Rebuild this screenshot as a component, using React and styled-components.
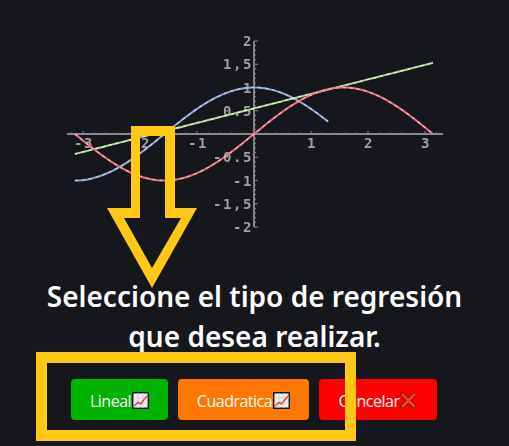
import React from "react";
import styled, { createGlobalStyle } from "styled-components";

const Global = createGlobalStyle`
  html, body { margin: 0; padding: 0; background: #15171c; }
  body { font-family: "Noto Sans", "Open Sans", "Liberation Sans", sans-serif; color: #fff; overflow: hidden; }
`;

const Page = styled.div`
  position: relative;
  width: 509px;
  height: 446px;
  display: flex;
  flex-direction: column;
  align-items: center;
  box-sizing: border-box;
  padding-top: 30px;
  overflow: hidden;
`;

const PlotFigure = styled.svg`
  display: block;
  width: 400px;
  height: 214px;
  flex: none;
  margin-left: 1px;
  filter: blur(0.35px);
`;

const Title = styled.h2`
  margin: 32px 0 0;
  width: 440px;
  font-size: 28px;
  line-height: 40px;
  font-weight: 600;
  text-align: center;
`;

const ButtonRow = styled.div`
  display: flex;
  gap: 10px;
  margin: 23px 1px 0 0;
`;

const Action = styled.button`
  display: flex;
  align-items: center;
  justify-content: center;
  height: 41px;
  width: ${(p) => p.$w}px;
  padding: 2px 0 0;
  border: none;
  border-radius: 4px;
  background: ${(p) => p.$bg};
  color: #fff;
  font: 400 16px "Open Sans", "Noto Sans", sans-serif;
  letter-spacing: -0.5px;
`;

const Icon = styled.svg`
  width: 17px;
  height: 17px;
  flex: none;
  margin-left: 1px;
`;

const Annotation = styled.svg`
  position: absolute;
  left: 0;
  top: 0;
  width: 509px;
  height: 446px;
  pointer-events: none;
`;

const X0 = 253 - 54, Y0 = 134 - 30;
const px = (x) => X0 + 57 * x;
const py = (y) => Y0 - 46.5 * y;
const curve = (fn, a, b) => {
  const pts = [];
  for (let i = 0; i <= 80; i++) {
    const x = a + ((b - a) * i) / 80;
    pts.push(`${px(x).toFixed(1)},${py(fn(x)).toFixed(1)}`);
  }
  return pts.join(" ");
};

const Ticks = () => {
  const t = [];
  for (let i = -16; i <= 16; i++) {
    const x = px(i / 5);
    t.push(<line key={"x" + i} x1={x} x2={x} y1={Y0 - (i % 5 === 0 ? 3 : 1.5)} y2={Y0} />);
  }
  for (let i = -20; i <= 20; i++) {
    const y = py(i / 10);
    t.push(<line key={"y" + i} x1={X0} x2={X0 + (i % 5 === 0 ? 4 : 2)} y1={y} y2={y} />);
  }
  return <g stroke="#8a8a8a" strokeWidth="1">{t}</g>;
};

const AxisLabel = styled.text`
  font-family: "DejaVu Sans Mono", "Liberation Mono", monospace;
  font-size: 14px;
  font-weight: 700;
  letter-spacing: 1.6px;
  fill: #a0a0a0;
`;

const Curve = ({ fn, a, b, color, light }) => (
  <>
    <polyline points={curve(fn, a, b)} fill="none" stroke={color} strokeWidth="2" />
    <polyline points={curve(fn, a, b)} fill="none" stroke={light} strokeWidth="1.2" strokeDasharray="3 4" />
  </>
);

const Plot = () => (
  <PlotFigure viewBox="0 0 400 214">
    <line x1={12} x2={388} y1={Y0} y2={Y0} stroke="#b0b0b0" strokeWidth="1.4" />
    <line x1={X0} x2={X0} y1={py(2)} y2={py(-2)} stroke="#b0b0b0" strokeWidth="1.4" />
    <Ticks />
    {[["-3", -3], ["-2", -2], ["-1", -1], ["1", 1], ["2", 2], ["3", 3]].map(([l, v]) => (
      <AxisLabel key={l} x={px(v) + 1} y={Y0 + 14} textAnchor="middle">{l}</AxisLabel>
    ))}
    {[["2", 2], ["1,5", 1.5], ["1", 1], ["0.5", 0.5], ["-0.5", -0.5], ["-1", -1], ["-1,5", -1.5], ["-2", -2]].map(([l, v]) => (
      <AxisLabel key={l} x={X0 - 1} y={py(v) + 5} textAnchor="end">{l}</AxisLabel>
    ))}
    <Curve fn={Math.cos} a={-Math.PI} b={1.3} color="#8ea6d8" light="#c6d2f0" />
    <Curve fn={(x) => 0.55 + 0.312 * x} a={-Math.PI} b={Math.PI} color="#aed78e" light="#e6f5d8" />
    <Curve fn={Math.sin} a={-Math.PI} b={Math.PI} color="#e8707c" light="#f6b8be" />
  </PlotFigure>
);

const ChartEmoji = () => (
  <Icon viewBox="0 0 17 17">
    <rect x="0.75" y="0.75" width="15.5" height="15.5" fill="#eceef3" stroke="#14142a" strokeWidth="1.5" />
    <path d="M1 6h15M1 11h15M6 1v15M11 1v15" stroke="#d0d3dc" strokeWidth="1" />
    <path d="M2 14 6 10.5l2.5 1.5L15 4" fill="none" stroke="#ec4a3a" strokeWidth="1.6" />
  </Icon>
);

const CrossEmoji = () => (
  <Icon viewBox="0 0 17 17">
    <path d="M3 0.5 8.5 6 14 0.5 16.5 3 11 8.5 16.5 14 14 16.5 8.5 11 3 16.5 0.5 14 6 8.5 0.5 3Z" fill="#e04a25" stroke="#701212" strokeWidth="1" />
  </Icon>
);

export default function App() {
  return (
    <Page>
      <Global />
      <Plot />
      <Title>Seleccione el tipo de regresión que desea realizar.</Title>
      <ButtonRow>
        <Action $bg="#00b300" $w={97}>Lineal<ChartEmoji /></Action>
        <Action $bg="#ff7700" $w={131}>Cuadratica<ChartEmoji /></Action>
        <Action $bg="#ff0000" $w={118}>Cancelar<CrossEmoji /></Action>
      </ButtonRow>
      <Annotation viewBox="0 0 509 446">
        <path fillRule="evenodd" fill="#ffc815" d="M131 126H175V208H197L152 288 107 208H131ZM140 136V218H124L152 268 181 218H165V136Z" />
        <path fillRule="evenodd" fill="#ffc815" d="M36 352H356V441H36ZM47 363V430H345V363Z" />
      </Annotation>
    </Page>
  );
}
